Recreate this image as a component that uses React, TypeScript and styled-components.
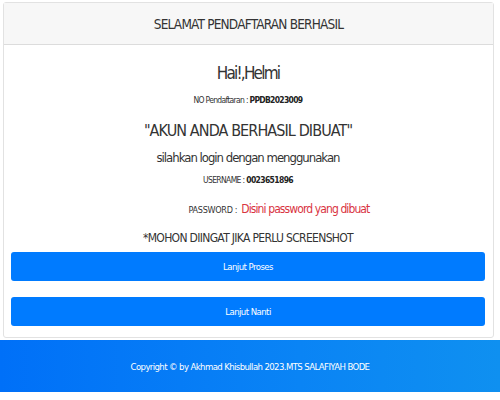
import React from "react";
import styled, { createGlobalStyle } from "styled-components";

const Global = createGlobalStyle`
  html, body { margin: 0; padding: 0; background: #ffffff; }
  body { font-family: "DejaVu Sans Condensed", "Liberation Sans", sans-serif; color: #333; }
`;

const Page = styled.div`
  width: 500px;
  height: 400px;
  display: flex;
  flex-direction: column;
  background: #fff;
  overflow: hidden;
`;

const CardWrap = styled.div`
  padding: 2px 6px 0 3px;
`;

const Card = styled.div`
  border: 1px solid #e2e2e2;
  border-radius: 3px;
  background: #fff;
  display: flex;
  flex-direction: column;
`;

const CardHeader = styled.div`
  height: 41px;
  background: #f7f7f7;
  border-bottom: 1px solid #dcdcdc;
  display: flex;
  align-items: center;
  justify-content: center;
  font-size: 13.5px;
  letter-spacing: -0.8px;
  color: #333;
`;

const CardBody = styled.div`
  padding: 16px 8px 11px 7px;
  display: flex;
  flex-direction: column;
  align-items: center;
`;

const Line = styled.div<{ $size: number; $lh: number; $mt: number; $ls: number }>`
  font-size: ${(p) => p.$size}px;
  line-height: ${(p) => p.$lh}px;
  margin-top: ${(p) => p.$mt}px;
  letter-spacing: ${(p) => p.$ls}px;
  color: #333;
  text-align: center;
  white-space: nowrap;
`;

const Strong = styled.span`
  font-weight: bold;
  color: #222;
`;

const PassLine = styled.div`
  margin-top: 16px;
  margin-left: 62px;
  height: 16px;
  display: flex;
  align-items: baseline;
  font-size: 9px;
  letter-spacing: -0.3px;
  white-space: nowrap;
`;

const Red = styled.span`
  color: #d9343f;
  font-size: 12px;
  letter-spacing: -0.9px;
  margin-left: 4px;
`;

const Buttons = styled.div`
  align-self: stretch;
  display: flex;
  flex-direction: column;
  gap: 16px;
  margin-top: 6px;
`;

const Button = styled.button`
  width: 100%;
  height: 29px;
  border: none;
  border-radius: 3px;
  background: #007bff;
  color: #fff;
  font-family: inherit;
  font-size: 9.5px;
  letter-spacing: -0.55px;
  display: flex;
  align-items: center;
  justify-content: center;
  cursor: pointer;
`;

const Footer = styled.footer`
  margin-top: 2px;
  height: 52px;
  background: linear-gradient(90deg, #0070f8 0%, #0a84f5 60%, #0f90f0 100%);
  color: #fff;
  display: flex;
  align-items: center;
  justify-content: center;
  font-size: 9.5px;
  letter-spacing: -0.6px;
`;

export default function App() {
  return (
    <Page>
      <Global />
      <CardWrap>
        <Card>
          <CardHeader>SELAMAT PENDAFTARAN BERHASIL</CardHeader>
          <CardBody>
            <Line $size={17} $lh={24} $mt={0} $ls={-1.8}>Hai!,Helmi</Line>
            <Line $size={8.5} $lh={12} $mt={9} $ls={-0.7}>
              NO Pendaftaran : <Strong>PPDB2023009</Strong>
            </Line>
            <Line $size={16} $lh={22} $mt={14} $ls={-0.9}>"AKUN ANDA BERHASIL DIBUAT"</Line>
            <Line $size={13} $lh={18} $mt={7} $ls={-1}>silahkan login dengan menggunakan</Line>
            <Line $size={8.5} $lh={12} $mt={7} $ls={-0.65}>
              USERNAME : <Strong>0023651896</Strong>
            </Line>
            <PassLine>
              PASSWORD : <Red>Disini password yang dibuat</Red>
            </PassLine>
            <Line $size={12} $lh={16} $mt={12} $ls={-0.67}>*MOHON DIINGAT JIKA PERLU SCREENSHOT</Line>
            <Buttons>
              <Button>Lanjut Proses</Button>
              <Button>Lanjut Nanti</Button>
            </Buttons>
          </CardBody>
        </Card>
      </CardWrap>
      <Footer>Copyright © by Akhmad Khisbullah 2023.MTS SALAFIYAH BODE</Footer>
    </Page>
  );
}
